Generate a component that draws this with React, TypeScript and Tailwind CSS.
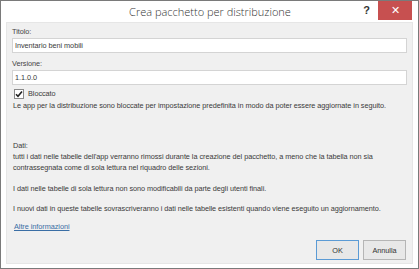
export default function App() {
  const font = { fontFamily: '"Segoe UI", "Liberation Sans", Arial, sans-serif' };
  return (
    <div className="w-[419px] h-[269px] bg-white border border-[#7a7a7a] flex flex-col text-[#3a3a3a]" style={font}>
      {/* title bar */}
      <div className="h-[21px] flex items-center relative shrink-0">
        <div
          className="flex-1 text-center text-[11px] font-light text-[#333] pt-[1px] pl-[1px]"
          style={{ fontFamily: '"Open Sans", sans-serif' }}
        >
          Crea pacchetto per distribuzione
        </div>
        <div className="absolute right-[6px] top-0 flex items-start">
          <span className="text-[11px] font-bold text-[#333] mr-[8px] mt-[1px]">?</span>
          <button className="w-[34px] h-[19px] bg-[#c75050] text-white text-[11px] flex items-center justify-center">
            ✕
          </button>
        </div>
      </div>

      {/* content */}
      <div className="flex-1 mx-[5px] mb-[4px] bg-[#f0f0f0] border border-[#e6e6e6] px-[5px] pt-[3px] flex flex-col text-[7.3px] leading-[11px] tracking-[-0.05px]">
        <label className="text-[#444]">Titolo:</label>
        <div className="mt-[1px] h-[15px] bg-white border border-[#d4d4d4] flex items-center px-[2px]">
          Inventario beni mobili
        </div>
        <label className="mt-[5px] text-[#444]">Versione:</label>
        <div className="mt-[1px] h-[15px] bg-white border border-[#d4d4d4] flex items-center px-[2px]">
          1.1.0.0
        </div>
        <div className="mt-[3px] flex items-center gap-[4px] pl-[2px]">
          <span className="w-[10px] h-[10px] bg-white border border-[#8a8a8a] flex items-center justify-center">
            <svg width="8" height="8" viewBox="0 0 8 8">
              <path d="M1 4.2 L3 6.3 L7 1.5" fill="none" stroke="#222" strokeWidth="1.6" />
            </svg>
          </span>
          <span>Bloccato</span>
        </div>
        <p className="mt-[1px] pl-[1px]">
          Le app per la distribuzione sono bloccate per impostazione predefinita in modo da poter essere aggiornate in seguito.
        </p>
        <p className="mt-[29px] pl-[1px]">Dati:</p>
        <p className="pl-[1px]">
          tutti i dati nelle tabelle dell'app verranno rimossi durante la creazione del pacchetto, a meno che la tabella non sia contrassegnata come di sola lettura nel riquadro delle sezioni.
        </p>
        <p className="mt-[10px] pl-[1px]">I dati nelle tabelle di sola lettura non sono modificabili da parte degli utenti finali.</p>
        <p className="mt-[9px] pl-[1px]">
          I nuovi dati in queste tabelle sovrascriveranno i dati nelle tabelle esistenti quando viene eseguito un aggiornamento.
        </p>
        <a className="mt-[7px] pl-[2px] text-[#3a6ea5] underline">Altre informazioni</a>
        <div className="flex-1" />
        <div className="flex justify-end gap-[4px] mb-[3px] mr-[1px]">
          <button className="w-[43px] h-[20px] bg-[#e8e8e8] border border-[#5b9bd5] text-[#333]">OK</button>
          <button className="w-[43px] h-[20px] bg-[#e8e8e8] border border-[#b5b5b5] text-[#333]">Annulla</button>
        </div>
      </div>
    </div>
  );
}
